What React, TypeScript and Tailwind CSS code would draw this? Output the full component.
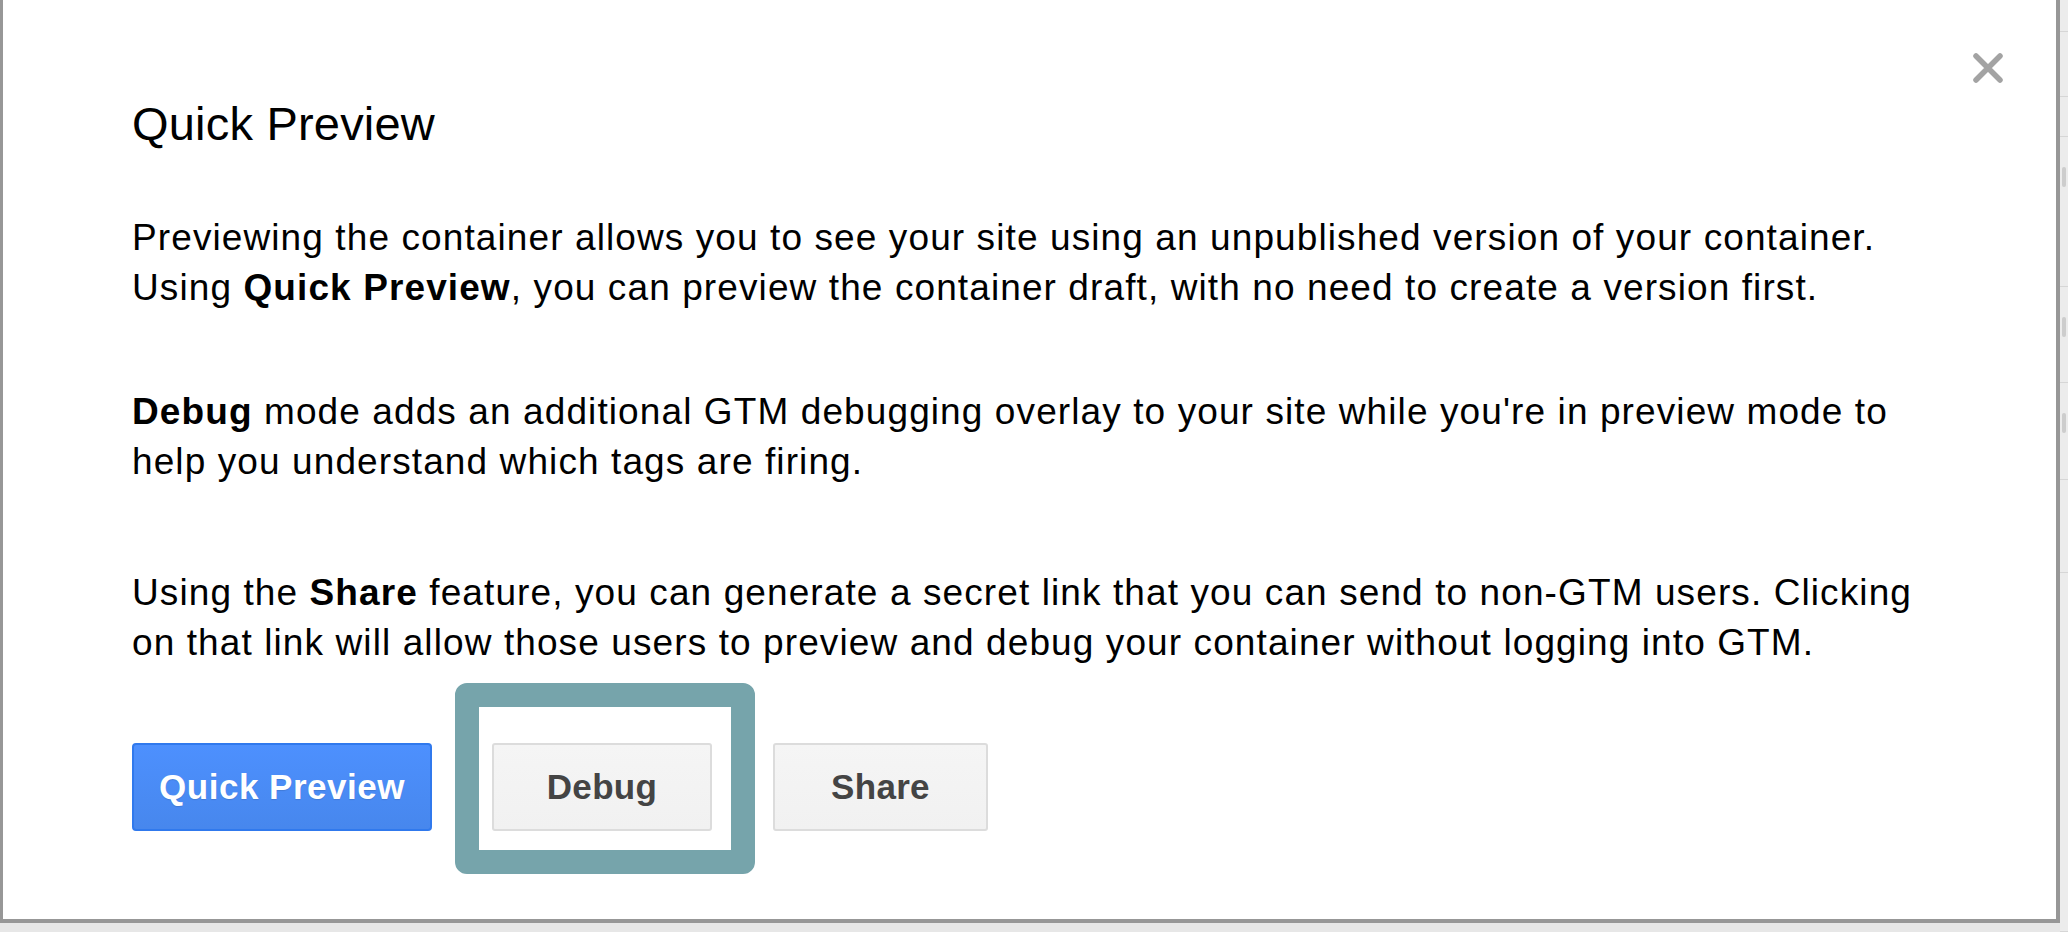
import React from 'react';

const CloseIcon = () => (
  <svg width="32" height="32" viewBox="0 0 32 32" fill="none">
    <path d="M4 4 L28 28 M28 4 L4 28" stroke="#a3a3a3" strokeWidth="5.5" strokeLinecap="round" />
  </svg>
);

const App: React.FC = () => {
  // faded page content peeking out to the right of the dialog
  const stripRows = [
    { h: 32, mark: false },
    { h: 65, mark: false },
    { h: 40, mark: false },
    { h: 150, mark: true },
    { h: 96, mark: true },
    { h: 97, mark: true },
    { h: 93, mark: false },
    { h: 359, mark: false },
  ];

  return (
    <div className="w-[2068px] h-[932px] bg-[#e7e7e7] flex overflow-hidden font-['Liberation_Sans',Arial,sans-serif]">
      {/* Dialog */}
      <div className="relative w-[2060px] h-[923px] shrink-0 bg-white border-l-[3px] border-r-[4px] border-b-[4px] border-[#979797] pl-[129px] pt-[100px]">
        <button className="absolute top-[52px] right-[52px] w-8 h-8 flex items-center justify-center">
          <CloseIcon />
        </button>

        <h1 className="text-[47px] leading-[47px] tracking-[0.2px] text-black font-normal">Quick Preview</h1>

        <p className="mt-[66px] text-[37px] leading-[50px] tracking-[1.1px] text-black whitespace-nowrap">
          Previewing the container allows you to see your site using an unpublished version of your container.
          <br />
          Using <b>Quick Preview</b>, you can preview the container draft, with no need to create a version first.
        </p>

        <p className="mt-[74px] text-[37px] leading-[50px] tracking-[1.1px] text-black whitespace-nowrap">
          <b>Debug</b> mode adds an additional GTM debugging overlay to your site while you're in preview mode to
          <br />
          help you understand which tags are firing.
        </p>

        <p className="mt-[81px] text-[37px] leading-[50px] tracking-[1.1px] text-black whitespace-nowrap">
          Using the <b>Share</b> feature, you can generate a secret link that you can send to non-GTM users. Clicking
          <br />
          on that link will allow those users to preview and debug your container without logging into GTM.
        </p>

        <div className="mt-[75px] flex items-start gap-[60px]">
          <button className="w-[300px] h-[88px] flex items-center justify-center rounded-[4px] border-2 border-[#3079ed] bg-gradient-to-b from-[#4d90fe] to-[#4787ed] text-white text-[35px] font-bold tracking-[0.5px] [text-shadow:0_1px_1px_rgba(0,0,0,0.12)]">
            Quick Preview
          </button>

          <div className="relative">
            <button className="w-[220px] h-[88px] flex items-center justify-center rounded-[3px] border-2 border-[#dcdcdc] bg-gradient-to-b from-[#f5f5f5] to-[#f1f1f1] text-[#444] text-[35px] font-bold tracking-[0.3px]">
              Debug
            </button>
            {/* annotation highlight */}
            <div className="pointer-events-none absolute left-[-37px] top-[-60px] w-[300px] h-[191px] rounded-[12px] border-[24px] border-[#76a4ab]" />
          </div>

          <button className="ml-px w-[215px] h-[88px] flex items-center justify-center rounded-[3px] border-2 border-[#dcdcdc] bg-gradient-to-b from-[#f5f5f5] to-[#f1f1f1] text-[#444] text-[35px] font-bold tracking-[0.3px]">
            Share
          </button>
        </div>
      </div>

      {/* Page behind, right edge */}
      <div className="w-[8px] h-[932px] shrink-0 bg-[#ececec] flex flex-col">
        {stripRows.map((row, i) => (
          <div key={i} className="border-b border-[#d6d6d6] pl-[2px] pt-[30px]" style={{ height: row.h }}>
            {row.mark && <div className="w-[4px] h-[20px] bg-[#cdcdcd] rounded-sm" />}
          </div>
        ))}
      </div>
    </div>
  );
};

export default App;
